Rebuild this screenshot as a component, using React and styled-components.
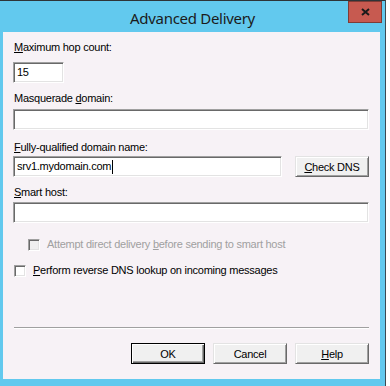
import React from 'react';
import styled, { createGlobalStyle, css } from 'styled-components';

const GlobalStyle = createGlobalStyle`
  html, body {
    margin: 0;
    padding: 0;
    background: #ffffff;
  }
  body {
    font-family: 'Liberation Sans', Arial, sans-serif;
    font-size: 11px;
    letter-spacing: -0.25px;
    color: #000000;
  }
`;

const Window = styled.div`
  box-sizing: border-box;
  width: 386px;
  height: 386px;
  background: #62c9ee;
  border-top: 1px solid #2e3438;
  border-right: 1px solid #3c4a52;
  padding: 0 5px 7px 3px;
  display: flex;
  flex-direction: column;
`;

const TitleBar = styled.div`
  height: 31px;
  display: flex;
  align-items: flex-start;
  justify-content: center;
  position: relative;
`;

const Title = styled.div`
  font-family: 'Noto Sans', 'Open Sans', sans-serif;
  font-size: 15px;
  letter-spacing: -0.3px;
  line-height: 20px;
  color: #1b1b1b;
  margin-top: 7px;
  margin-left: 2px;
`;

const CloseButton = styled.div`
  position: absolute;
  top: 0;
  right: -2px;
  width: 34px;
  height: 22px;
  box-sizing: border-box;
  background: #c75a50;
  border: 1px solid #7f3c36;
  display: flex;
  align-items: center;
  justify-content: center;
`;

const Body = styled.div`
  flex: 1;
  background: #f7f2f6;
  padding: 0 11px 0 10px;
  display: flex;
  flex-direction: column;
`;

const Label = styled.div`
  line-height: 13px;
  padding-left: 1px;
  margin-top: ${(p) => p.$top || 0}px;
  margin-bottom: ${(p) => p.$gap || 3}px;
  white-space: nowrap;
`;

const TextBox = styled.div`
  box-sizing: border-box;
  width: ${(p) => (p.$width ? `${p.$width}px` : '100%')};
  height: 21px;
  background: #ffffff;
  border-style: solid;
  border-width: 1px;
  border-color: #a0a0a0 #ffffff #ffffff #a0a0a0;
  box-shadow: inset 1px 1px 0 #696969, inset -1px -1px 0 #e3e3e3;
  padding: 0 3px;
  line-height: 19px;
  display: flex;
  align-items: center;
  white-space: nowrap;
`;

const Caret = styled.span`
  display: inline-block;
  width: 1px;
  height: 14px;
  background: #000000;
  margin-left: 1px;
`;

const Row = styled.div`
  display: flex;
  align-items: center;
  gap: 13px;
`;

const PushButton = styled.button`
  box-sizing: border-box;
  width: 74px;
  height: 21px;
  flex-shrink: 0;
  padding: 0;
  font-family: 'Liberation Sans', Arial, sans-serif;
  font-size: 11px;
  letter-spacing: -0.25px;
  color: #000000;
  background: #f0f0f0;
  border-style: solid;
  border-width: 1px;
  border-color: #e3e3e3 #696969 #696969 #e3e3e3;
  box-shadow: inset 1px 1px 0 #ffffff, inset -1px -1px 0 #a0a0a0;

  ${(p) =>
    p.$default &&
    css`
      border-color: #000000;
      box-shadow: inset 1px 1px 0 #ffffff, inset -1px -1px 0 #696969,
        inset -2px -2px 0 #a0a0a0;
    `};
`;

const CheckRow = styled.label`
  display: flex;
  align-items: center;
  line-height: 13px;
  margin-top: ${(p) => p.$top}px;
  padding-left: ${(p) => (p.$indent ? 15 : 1)}px;
  color: ${(p) => (p.$disabled ? '#a0a0a0' : '#000000')};
  white-space: nowrap;
`;

const CheckBox = styled.span`
  box-sizing: border-box;
  width: 12px;
  height: 12px;
  margin-right: 7px;
  background: ${(p) => (p.$disabled ? '#f0f0f0' : '#ffffff')};
  border-style: solid;
  border-width: 1px;
  border-color: #a0a0a0 #ffffff #ffffff #a0a0a0;
  box-shadow: inset 1px 1px 0 #696969, inset -1px -1px 0 #e3e3e3;
`;

const Separator = styled.div`
  margin-top: auto;
  height: 1px;
  background: #a0a0a0;
  border-bottom: 1px solid #ffffff;
  margin-left: 1px;
`;

const ButtonBar = styled.div`
  display: flex;
  justify-content: flex-end;
  gap: 8px;
  margin-top: 14px;
  margin-bottom: 15px;
`;

function App() {
  return (
    <>
      <GlobalStyle />
      <Window>
        <TitleBar>
          <Title>Advanced Delivery</Title>
          <CloseButton>
            <svg width='9' height='8' viewBox='0 0 9 8'>
              <path d='M1 1 L8 7 M8 1 L1 7' stroke='#1a1a1a' strokeWidth='2' />
            </svg>
          </CloseButton>
        </TitleBar>
        <Body>
          <Label $top={9} $gap={8}>
            <u>M</u>aximum hop count:
          </Label>
          <TextBox $width={51}>15</TextBox>

          <Label $top={9} $gap={4}>
            Masquerade <u>d</u>omain:
          </Label>
          <TextBox />

          <Label $top={11} $gap={2}>
            <u>F</u>ully-qualified domain name:
          </Label>
          <Row>
            <TextBox $width={269}>
              <span>srv1.mydomain.com</span>
              <Caret />
            </TextBox>
            <PushButton>
              <u>C</u>heck DNS
            </PushButton>
          </Row>

          <Label $top={9} $gap={3}>
            <u>S</u>mart host:
          </Label>
          <TextBox />

          <CheckRow $top={15} $indent $disabled>
            <CheckBox $disabled />
            <span>
              Attempt direct delivery <u>b</u>efore sending to smart host
            </span>
          </CheckRow>
          <CheckRow $top={13}>
            <CheckBox />
            <span>
              <u>P</u>erform reverse DNS lookup on incoming messages
            </span>
          </CheckRow>

          <Separator />
          <ButtonBar>
            <PushButton $default>OK</PushButton>
            <PushButton>Cancel</PushButton>
            <PushButton>
              <u>H</u>elp
            </PushButton>
          </ButtonBar>
        </Body>
      </Window>
    </>
  );
}

export default App;
